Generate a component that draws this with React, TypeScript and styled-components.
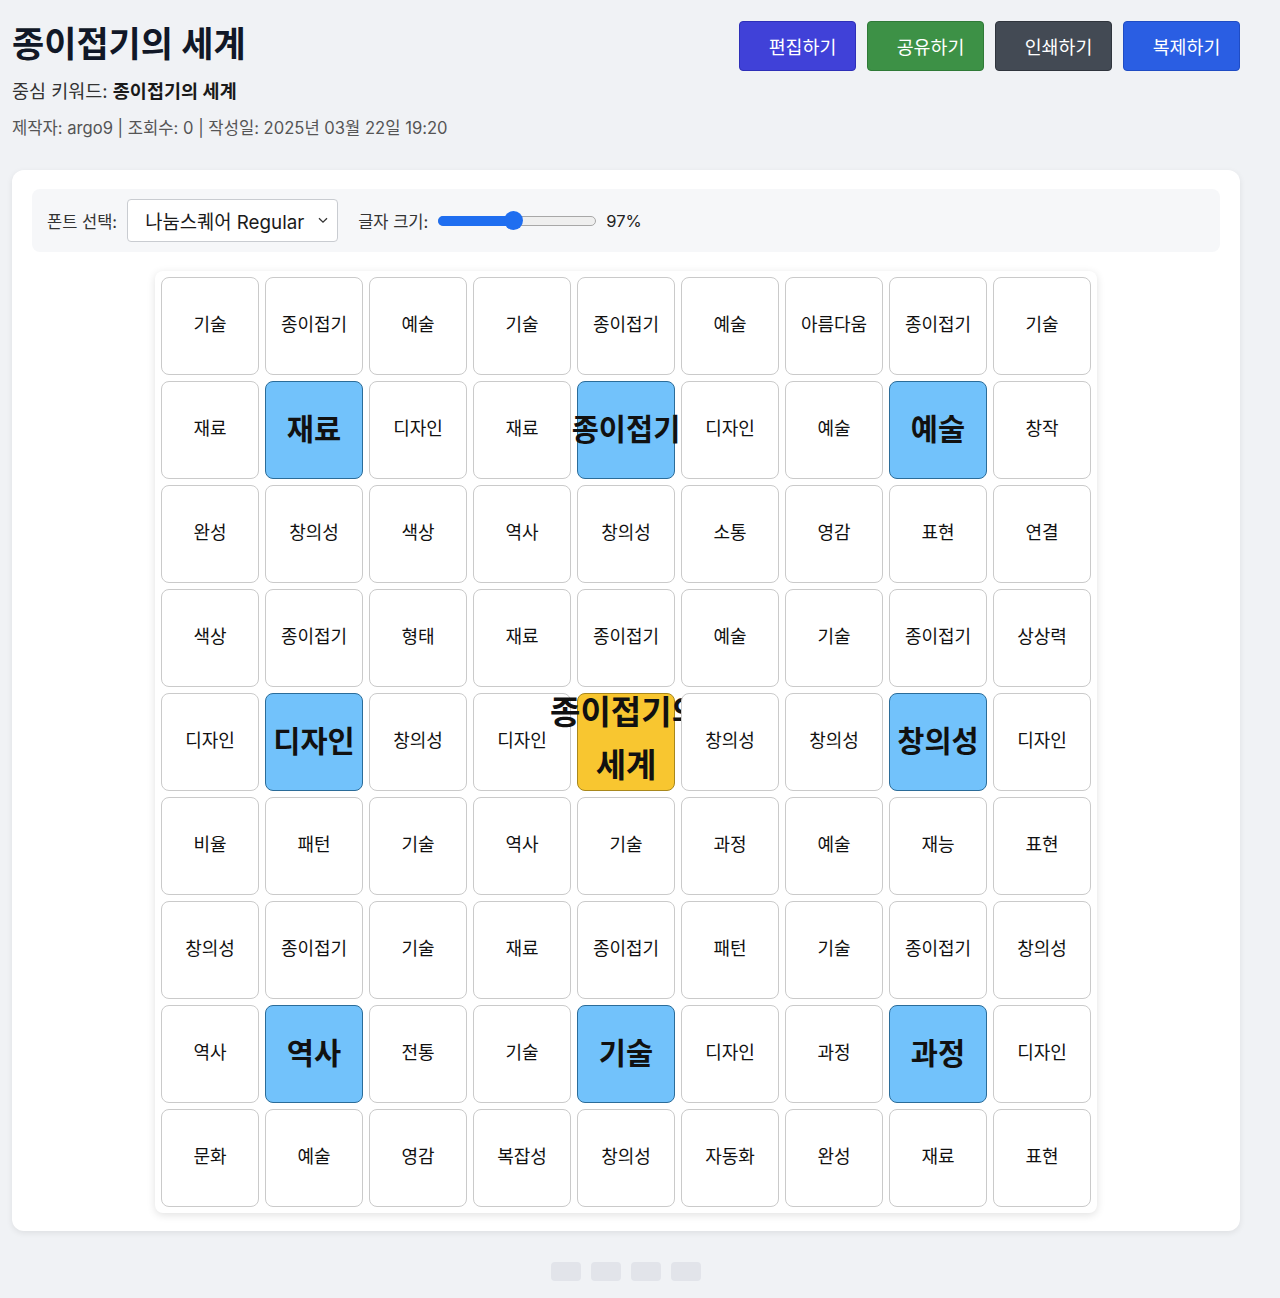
import styled, { createGlobalStyle } from "styled-components";

const GlobalStyle = createGlobalStyle`
  html, body {
    margin: 0;
    padding: 0;
    background: #f0f2f5;
    font-family: Inter, "Noto Sans CJK KR", sans-serif;
    color: #1a1a1a;
  }
`;

type Kind = "normal" | "hot" | "core";

const rows: string[][] = [
  ["기술", "종이접기", "예술", "기술", "종이접기", "예술", "아름다움", "종이접기", "기술"],
  ["재료", "재료", "디자인", "재료", "종이접기", "디자인", "예술", "예술", "창작"],
  ["완성", "창의성", "색상", "역사", "창의성", "소통", "영감", "표현", "연결"],
  ["색상", "종이접기", "형태", "재료", "종이접기", "예술", "기술", "종이접기", "상상력"],
  ["디자인", "디자인", "창의성", "디자인", "종이접기의 세계", "창의성", "창의성", "창의성", "디자인"],
  ["비율", "패턴", "기술", "역사", "기술", "과정", "예술", "재능", "표현"],
  ["창의성", "종이접기", "기술", "재료", "종이접기", "패턴", "기술", "종이접기", "창의성"],
  ["역사", "역사", "전통", "기술", "기술", "디자인", "과정", "과정", "디자인"],
  ["문화", "예술", "영감", "복잡성", "창의성", "자동화", "완성", "재료", "표현"],
];

const kindOf = (r: number, c: number): Kind => {
  if (r === 4 && c === 4) return "core";
  const sub = [1, 4, 7];
  if (sub.includes(r) && sub.includes(c)) return "hot";
  return "normal";
};

const Page = styled.div`
  width: 1228px;
  margin-left: 12px;
  padding-top: 21px;
`;

const Header = styled.header`
  display: flex;
  justify-content: space-between;
  align-items: flex-start;
`;

const TitleBlock = styled.div`
  display: flex;
  flex-direction: column;
`;

const Title = styled.h1`
  margin: 0;
  font-size: 35px;
  line-height: 46px;
  font-weight: 700;
  color: #111827;
`;

const Keyword = styled.p`
  margin: 11px 0 0;
  font-size: 18.5px;
  line-height: 26px;
  color: #333;

  strong {
    font-weight: 600;
    color: #1a1a1a;
  }
`;

const Meta = styled.p`
  margin: 12px 0 0;
  font-size: 16.6px;
  line-height: 24px;
  color: #555;
`;

const Actions = styled.div`
  display: flex;
  gap: 11px;
`;

const ActionButton = styled.button<{ $bg: string; $edge: string }>`
  width: 117px;
  height: 50px;
  padding: 0 0 0 10px;
  border: 1px solid ${(p) => p.$edge};
  border-radius: 4px;
  background: ${(p) => p.$bg};
  color: #fff;
  font-family: inherit;
  font-size: 18.4px;
  text-align: center;
  cursor: pointer;
`;

const Card = styled.section`
  margin-top: 30px;
  background: #fff;
  border-radius: 12px;
  box-shadow: 0 2px 6px rgba(0, 0, 0, 0.08);
  padding: 19px 20px 18px;
  display: flex;
  flex-direction: column;
  align-items: center;
  gap: 19px;
`;

const Toolbar = styled.div`
  align-self: stretch;
  display: flex;
  align-items: center;
  gap: 20px;
  height: 63px;
  box-sizing: border-box;
  padding: 0 15px;
  background: #f6f7f9;
  border-radius: 8px;
`;

const Control = styled.label`
  display: flex;
  align-items: center;
  gap: 10px;
  font-size: 16.5px;
  color: #333;
`;

const SelectBox = styled.div`
  position: relative;
  width: 211px;
  height: 43px;
  box-sizing: border-box;
  border: 1px solid #c9ccd1;
  border-radius: 4px;
  background: #fff;
  display: flex;
  align-items: center;
  padding-left: 17px;
  font-size: 18.8px;
  color: #1a1a1a;
`;

const Chevron = styled.svg`
  position: absolute;
  right: 9px;
  top: 50%;
  margin-top: -4px;
`;

const Track = styled.div`
  position: relative;
  width: 158px;
  height: 10px;
  box-sizing: border-box;
  border: 1px solid #a8a8a8;
  border-radius: 5px;
  background: #efefef;
`;

const Fill = styled.div`
  position: absolute;
  left: -1px;
  top: -1px;
  bottom: -1px;
  border-radius: 5px;
  background: #1f6ef0;
`;

const Thumb = styled.div`
  position: absolute;
  top: 50%;
  width: 19px;
  height: 19px;
  margin: -9.5px 0 0 -9.5px;
  border-radius: 50%;
  background: #1f6ef0;
`;

const Value = styled.span`
  font-size: 16.5px;
  color: #222;
`;

const Board = styled.div`
  display: grid;
  grid-template-columns: repeat(9, 98px);
  grid-auto-rows: 98px;
  gap: 6px;
  padding: 6px;
  background: #fff;
  border-radius: 8px;
  box-shadow: 0 2px 8px rgba(0, 0, 0, 0.12);
`;

const cellLook = {
  normal: { bg: "#fff", edge: "#cacaca", size: "18px", weight: 400, line: "1.3", lift: "4px" },
  hot: { bg: "#72c2fb", edge: "#2b6c99", size: "29.5px", weight: 700, line: "1.3", lift: "6px" },
  core: { bg: "#f8c630", edge: "#a8871c", size: "33px", weight: 700, line: "53px", lift: "10px" },
};

const Cell = styled.div<{ $kind: Kind }>`
  display: flex;
  align-items: center;
  justify-content: center;
  text-align: center;
  box-sizing: border-box;
  border-radius: 8px;
  border: 1px solid ${(p) => cellLook[p.$kind].edge};
  background: ${(p) => cellLook[p.$kind].bg};
  padding-bottom: ${(p) => cellLook[p.$kind].lift};
  color: #111;
  font-family: "Noto Sans CJK KR", sans-serif;
  font-size: ${(p) => cellLook[p.$kind].size};
  font-weight: ${(p) => cellLook[p.$kind].weight};
  line-height: ${(p) => cellLook[p.$kind].line};
  white-space: ${(p) => (p.$kind === "core" ? "normal" : "nowrap")};
  word-break: keep-all;
`;

const Pager = styled.div`
  display: flex;
  justify-content: center;
  gap: 10px;
  margin-top: 31px;
  padding-bottom: 18px;
`;

const PagerDot = styled.span`
  width: 30px;
  height: 19px;
  border-radius: 4px;
  background: #e2e4ea;
`;

const buttons = [
  { label: "편집하기", bg: "#4041d8", edge: "#2e2fb8" },
  { label: "공유하기", bg: "#3d9146", edge: "#2f7a37" },
  { label: "인쇄하기", bg: "#434a54", edge: "#30353d" },
  { label: "복제하기", bg: "#2a5ee3", edge: "#1f4cc4" },
];

const App = () => {
  const size = 97;
  const ratio = (size - 50) / 100;

  return (
    <Page>
      <GlobalStyle />
      <Header>
        <TitleBlock>
          <Title>종이접기의 세계</Title>
          <Keyword>
            중심 키워드: <strong>종이접기의 세계</strong>
          </Keyword>
          <Meta>제작자: argo9 | 조회수: 0 | 작성일: 2025년 03월 22일 19:20</Meta>
        </TitleBlock>
        <Actions>
          {buttons.map((b) => (
            <ActionButton key={b.label} $bg={b.bg} $edge={b.edge}>
              {b.label}
            </ActionButton>
          ))}
        </Actions>
      </Header>

      <Card>
        <Toolbar>
          <Control>
            폰트 선택:
            <SelectBox>
              나눔스퀘어 Regular
              <Chevron width="10" height="7" viewBox="0 0 10 7">
                <path d="M1 1.2 L5 5.2 L9 1.2" fill="none" stroke="#333" strokeWidth="1.3" />
              </Chevron>
            </SelectBox>
          </Control>
          <Control>
            글자 크기:
            <Track>
              <Fill style={{ width: `${9.5 + ratio * 139}px` }} />
              <Thumb style={{ left: `${9.5 + ratio * 139 - 1}px` }} />
            </Track>
            <Value>{size}%</Value>
          </Control>
        </Toolbar>

        <Board>
          {rows.map((row, r) =>
            row.map((word, c) => (
              <Cell key={`${r}-${c}`} $kind={kindOf(r, c)}>
                {word}
              </Cell>
            ))
          )}
        </Board>
      </Card>

      <Pager>
        {[0, 1, 2, 3].map((i) => (
          <PagerDot key={i} />
        ))}
      </Pager>
    </Page>
  );
};

export default App;
